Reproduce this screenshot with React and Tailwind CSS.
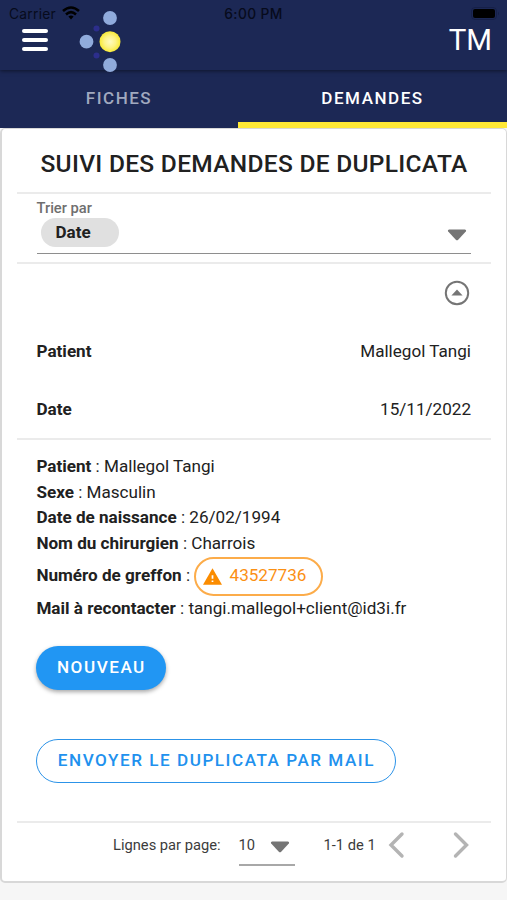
import React, { useState } from "react";

const details = [
  { label: "Patient", value: "Mallegol Tangi" },
  { label: "Sexe", value: "Masculin" },
  { label: "Date de naissance", value: "26/02/1994" },
  { label: "Nom du chirurgien", value: "Charrois" },
];

const Caret = () => (
  <svg className="block w-5 h-3" viewBox="0 0 20 12" fill="#757575">
    <path d="M2 0.4H18Q19.8 0.7 18.8 2.6L11.2 10.8Q10 11.8 8.8 10.8L1.2 2.6Q0.2 0.7 2 0.4Z" />
  </svg>
);

const Logo = () => (
  <svg className="block w-[42px] h-[62px]" viewBox="0 0 42 62">
    <defs>
      <radialGradient id="sun">
        <stop offset="0" stopColor="#fffbc0" />
        <stop offset="0.55" stopColor="#fdf385" />
        <stop offset="1" stopColor="#f8ea35" />
      </radialGradient>
    </defs>
    <g fill="#2c2e8c">
      <circle cx="17.5" cy="17.5" r="3" />
      <circle cx="17.5" cy="44.5" r="3" />
    </g>
    <g fill="#90abdc">
      <circle cx="31" cy="7" r="6.9" />
      <circle cx="7.5" cy="30.7" r="6.9" />
      <circle cx="31" cy="54" r="6.9" />
    </g>
    <circle cx="31" cy="30.7" r="10.5" fill="url(#sun)" />
  </svg>
);

const StatusBar = () => (
  <div className="absolute inset-x-0 top-0 h-7 px-[9px] flex items-center justify-between font-['Inter',sans-serif] text-[13.8px] text-[#070b1c]">
    <div className="flex-1 flex items-center gap-[6px]">
      <span className="tracking-[0.25px]">Carrier</span>
      <svg className="w-[18px] h-[14px] -mt-0.5" viewBox="0 0 18 14" fill="none" stroke="#000" strokeWidth="2.6">
        <path d="M1 5Q9 -2 17 5" />
        <path d="M4 8.4Q9 4 14 8.4" />
        <path d="M6.4 10.6Q9 8.6 11.6 10.6L9 13.6Z" fill="#000" stroke="none" />
      </svg>
    </div>
    <span className="font-medium tracking-[0.4px]">6:00 PM</span>
    <div className="flex-1 flex justify-end">
      <svg className="w-[29px] h-[13px] -mr-0.5 -mt-px" viewBox="0 0 29 13">
        <rect x="0.5" y="0.5" width="25" height="12" rx="3.5" fill="none" stroke="#162048" />
        <rect x="2" y="2" width="22" height="9" rx="2" fill="#000" />
        <path d="M27 4.5Q29 6.5 27 8.5Z" fill="#162048" />
      </svg>
    </div>
  </div>
);

const Header = () => (
  <header className="relative h-[70px] bg-[#1c2855] shadow-[0_1px_4px_rgba(0,0,0,0.5)] z-10">
    <div className="h-full flex items-start pt-[11px] pl-[22px] pr-[15px]">
      <button className="mt-[18px] flex flex-col gap-[5px]">
        <span className="block w-[26px] h-1 rounded-full bg-white" />
        <span className="block w-[26px] h-1 rounded-full bg-white" />
        <span className="block w-[26px] h-1 rounded-full bg-white" />
      </button>
      <div className="ml-[31px]">
        <Logo />
      </div>
      <span className="ml-auto mt-[10px] text-[29.5px] leading-[38px] text-white">TM</span>
    </div>
    <StatusBar />
  </header>
);

const Divider = () => <hr className="mx-[15px] h-0 border-0 border-t-2 border-[#ebebeb]" />;

const App = () => {
  const [tab, setTab] = useState("demandes");

  return (
    <div className="w-[507px] h-[900px] overflow-hidden bg-[#f6f6f6] font-['Roboto',sans-serif] text-[17.1px] text-[#212121]">
      <Header />

      <nav className="h-[58px] flex bg-[#1c2855] text-[17px] font-medium tracking-[1.53px]">
        <button
          onClick={() => setTab("fiches")}
          className={`w-[238px] border-b-[6px] pt-[5px] ${tab === "fiches" ? "border-[#ffe836] text-white" : "border-transparent text-[#a1a9bf]"}`}
        >
          FICHES
        </button>
        <button
          onClick={() => setTab("demandes")}
          className={`flex-1 border-b-[6px] pt-[5px] ${tab === "demandes" ? "border-[#ffe836] text-white" : "border-transparent text-[#a1a9bf]"}`}
        >
          DEMANDES
        </button>
      </nav>

      <main className="h-[755px] bg-white border-2 border-t border-r border-[#d8d8d8] rounded-[5px]">
        <h1 className="h-[63px] pt-[7px] flex items-center justify-center text-[24.5px] font-medium tracking-[0.3px] whitespace-nowrap">
          SUIVI DES DEMANDES DE DUPLICATA
        </h1>
        <Divider />

        <div className="h-[68px] pl-[34.5px] pr-[35px]">
          <div className="h-[60px] border-b border-[#8e8e8e] flex justify-between">
            <div>
              <div className="pt-[5px] h-[24px] text-[14.7px] leading-[19px] font-medium text-[#6f6f6f]">Trier par</div>
              <div className="ml-[4.5px] w-[78px] h-[29px] rounded-full bg-[#e0e0e0] pl-[14.5px] text-[17px] leading-[28px] font-bold">
                Date
              </div>
            </div>
            <div className="mt-[35px] mr-1">
              <Caret />
            </div>
          </div>
        </div>
        <Divider />

        <section className="h-[174px] pl-[34.5px] pr-[35px]">
          <div className="h-[58px] flex items-center justify-end">
            <svg className="w-[26px] h-[26px] mr-px" viewBox="0 0 26 26">
              <circle cx="13" cy="13" r="11.2" fill="none" stroke="#757575" strokeWidth="2" />
              <path d="M7.4 15.4L13 9.6L18.6 15.4Z" fill="#757575" />
            </svg>
          </div>
          <div className="h-[58px] pt-0.5 flex items-center justify-between">
            <span className="font-bold">Patient</span>
            <span>Mallegol Tangi</span>
          </div>
          <div className="h-[58px] pt-0.5 flex items-center justify-between">
            <span className="font-bold">Date</span>
            <span>15/11/2022</span>
          </div>
        </section>
        <Divider />

        <section className="h-[381px] px-[34.4px] pt-[14px] leading-[25.7px]">
          {details.map((d) => (
            <div key={d.label}>
              <b>{d.label}</b> : {d.value}
            </div>
          ))}
          <div className="h-[39px] flex items-center">
            <b>Numéro de greffon</b>&nbsp;:
            <span className="ml-1 w-[129px] h-[39px] flex items-center rounded-full border-2 border-[#fcac4a] pl-[6.5px] text-[#fb9014]">
              <svg className="w-[19px] h-[17px] mr-[8px]" viewBox="1 2 22 19" fill="#fb8c00">
                <path d="M13,14H11V10H13M13,18H11V16H13M1,21H23L12,2L1,21Z" />
              </svg>
              43527736
            </span>
          </div>
          <div>
            <b>Mail à recontacter</b> : tangi.mallegol+client@id3i.fr
          </div>

          <button className="mt-[24px] block w-[130px] h-[44px] rounded-full bg-[#2196f3] text-white font-medium tracking-[1.53px] shadow-[0_2px_4px_rgba(0,0,0,0.35)]">
            NOUVEAU
          </button>
          <button className="mt-[49px] block w-[360px] h-[44px] rounded-full border border-[#2c93e8] text-[#2191ee] font-medium tracking-[1.53px] whitespace-nowrap">
            ENVOYER LE DUPLICATA PAR MAIL
          </button>
        </section>
        <Divider />

        <footer className="h-[57px] flex items-start text-[14.7px] text-[#3c3c3c]">
          <span className="ml-[111px] mt-[11px]">Lignes par page:</span>
          <div className="ml-[18px] h-[43px] w-[56px] flex justify-between border-b-2 border-[#a8a8a8] pr-[5px]">
            <span className="mt-[11px]">10</span>
            <span className="mt-[18px]">
              <Caret />
            </span>
          </div>
          <span className="ml-[29px] mt-[11px]">1-1 de 1</span>
          <svg className="ml-[12px] mt-[8px] w-[17px] h-[28px]" viewBox="0 0 17 28" fill="none" stroke="#b4b4b4" strokeWidth="3.4" strokeLinecap="round">
            <path d="M14 3L3 14L14 25" />
          </svg>
          <svg className="ml-[48px] mt-[8px] w-[17px] h-[28px]" viewBox="0 0 17 28" fill="none" stroke="#b4b4b4" strokeWidth="3.4" strokeLinecap="round">
            <path d="M2.5 3L13.5 14L2.5 25" />
          </svg>
        </footer>
      </main>
    </div>
  );
};

export default App;
